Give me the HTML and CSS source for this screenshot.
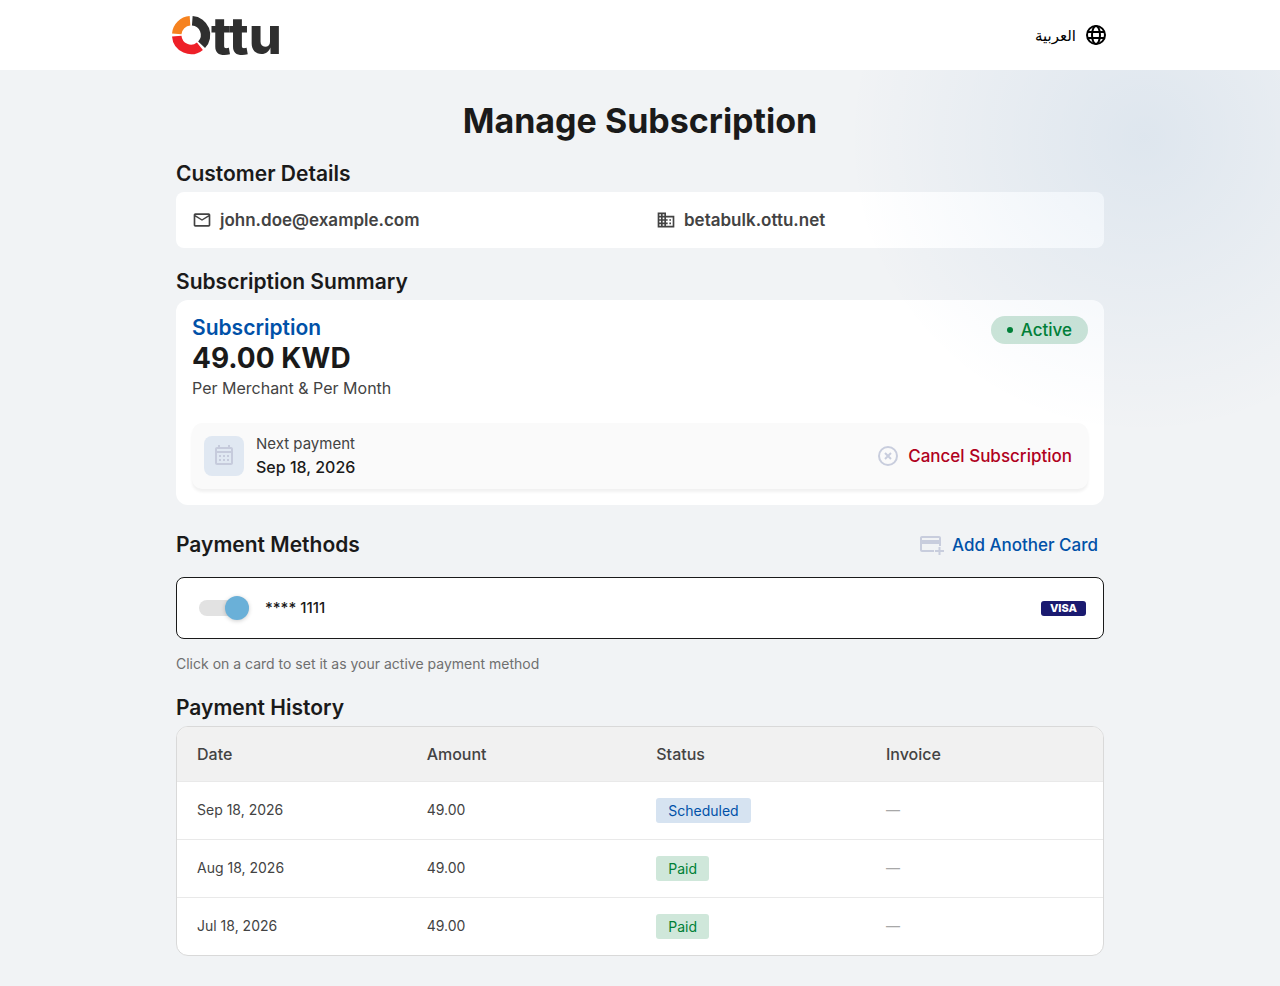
FILE: index.html
```html
<!DOCTYPE html>
<html lang="en">
<head>
    <meta charset="UTF-8">
    <meta name="viewport" content="width=device-width, initial-scale=1.0">
    <title>Manage Subscription</title>
    <link rel="stylesheet" href="styles.css">
</head>
<body>
    <header class="header">
        <div class="header-inner">
            <a href="#" class="logo" aria-label="Ottu">
                <svg width="124" height="70" viewBox="0 0 124 70">
                    <g fill="none" stroke-width="9.500">
                        <path d="M4.750 33.800A14.250 14.250 0 0 1 18 20.750" stroke="#f6821f"/>
                        <path d="M20.300 20.750A14.250 14.250 0 0 1 29.600 44.800" stroke="#2f2f2f"/>
                        <path d="M27.900 46.200A14.250 14.250 0 0 1 4.750 36.200" stroke="#ee2028"/>
                    </g>
                    <text class="logo-text" x="39" y="54">ttu</text>
                </svg>
            </a>
            <a href="#" class="lang" lang="ar">
                <span>العربية</span>
                <svg width="24" height="24" viewBox="0 0 24 24" fill="none" stroke="#000" stroke-width="2">
                    <circle cx="12" cy="12" r="9"/>
                    <ellipse cx="12" cy="12" rx="4" ry="9"/>
                    <path d="M3.600 9h16.800M3.600 15h16.800"/>
                </svg>
            </a>
        </div>
    </header>

    <main class="page">
        <div class="container">
            <h1>Manage Subscription</h1>

            <section>
                <h2>Customer Details</h2>
                <div class="card customer">
                    <div class="customer-item">
                        <svg width="20" height="20" viewBox="0 0 24 24" fill="#434343"><path d="M22 6c0-1.100-.9-2-2-2H4c-1.100 0-2 .9-2 2v12c0 1.100.9 2 2 2h16c1.100 0 2-.9 2-2V6zm-2 0l-8 5-8-5h16zm0 12H4V8l8 5 8-5v10z"/></svg>
                        <span>john.doe@example.com</span>
                    </div>
                    <div class="customer-item">
                        <svg width="20" height="20" viewBox="0 0 24 24" fill="#434343"><path d="M12 7V3H2v18h20V7H12zM6 19H4v-2h2v2zm0-4H4v-2h2v2zm0-4H4V9h2v2zm0-4H4V5h2v2zm4 12H8v-2h2v2zm0-4H8v-2h2v2zm0-4H8V9h2v2zm0-4H8V5h2v2zm10 12h-8v-2h2v-2h-2v-2h2v-2h-2V9h8v10zm-2-8h-2v2h2v-2zm0 4h-2v2h2v-2z"/></svg>
                        <span>betabulk.ottu.net</span>
                    </div>
                </div>
            </section>

            <section>
                <h2>Subscription Summary</h2>
                <div class="card summary">
                    <div class="summary-top">
                        <div>
                            <h3>Subscription</h3>
                            <p class="price">49.00 KWD</p>
                            <p class="period">Per Merchant &amp; Per Month</p>
                        </div>
                        <span class="status">Active</span>
                    </div>
                    <div class="next">
                        <div class="next-icon">
                            <svg width="24" height="24" viewBox="0 0 24 24" fill="#c6cbdc"><path d="M19 3h-1V1h-2v2H8V1H6v2H5c-1.100 0-2 .9-2 2v14c0 1.100.9 2 2 2h14c1.100 0 2-.9 2-2V5c0-1.100-.9-2-2-2zm0 16H5V9h14v10zm0-12H5V5h14v2z"/><path d="M7 11h2v2H7zM11 11h2v2h-2zM15 11h2v2h-2zM7 15h2v2H7zM11 15h2v2h-2zM15 15h2v2h-2z"/></svg>
                        </div>
                        <div class="next-text">
                            <p class="next-label">Next payment</p>
                            <p class="next-date">Sep 18, 2026</p>
                        </div>
                        <button type="button" class="btn btn-cancel">
                            <svg width="24" height="24" viewBox="0 0 24 24" fill="none" stroke="#c8cddd" stroke-width="2"><circle cx="12" cy="12" r="9"/><path d="M9 9l6 6M15 9l-6 6"/></svg>
                            Cancel Subscription
                        </button>
                    </div>
                </div>
            </section>

            <section>
                <div class="section-head">
                    <h2>Payment Methods</h2>
                    <button type="button" class="btn btn-add">
                        <svg width="24" height="24" viewBox="0 0 24 24" fill="#c8cddd"><path fill-rule="evenodd" d="M2 3h17c1.100 0 2 .9 2 2v8h-2v-2H2v6h12v2H2c-1.100 0-2-.9-2-2V5c0-1.100.9-2 2-2zm0 2v2h17V5H2z"/><path d="M18.500 14h2v3h3.500v2h-3.500v3h-2v-3H15v-2h3.500z"/></svg>
                        Add Another Card
                    </button>
                </div>
                <label class="pay-card" for="card-1111">
                    <input type="checkbox" id="card-1111" class="toggle" checked>
                    <span class="pay-number">**** 1111</span>
                    <span class="brand">VISA</span>
                </label>
                <p class="hint">Click on a card to set it as your active payment method</p>
            </section>

            <section>
                <h2>Payment History</h2>
                <div class="table-wrap">
                    <table>
                        <thead>
                            <tr>
                                <th>Date</th>
                                <th>Amount</th>
                                <th>Status</th>
                                <th>Invoice</th>
                            </tr>
                        </thead>
                        <tbody>
                            <tr>
                                <td>Sep 18, 2026</td>
                                <td>49.00</td>
                                <td><span class="tag tag-scheduled">Scheduled</span></td>
                                <td class="empty">—</td>
                            </tr>
                            <tr>
                                <td>Aug 18, 2026</td>
                                <td>49.00</td>
                                <td><span class="tag tag-paid">Paid</span></td>
                                <td class="empty">—</td>
                            </tr>
                            <tr>
                                <td>Jul 18, 2026</td>
                                <td>49.00</td>
                                <td><span class="tag tag-paid">Paid</span></td>
                                <td class="empty">—</td>
                            </tr>
                        </tbody>
                    </table>
                </div>
            </section>
        </div>
    </main>
</body>
</html>
```

FILE: styles.css
```css
* {
    box-sizing: border-box;
}
body {
    margin: 0;
    min-height: 100vh;
    display: flex;
    flex-direction: column;
    font-family: "Inter", sans-serif;
    font-size: 16px;
    line-height: 24px;
    color: #434343;
    background-color: #f1f3f5;
}
h1, h2, h3, p {
    margin: 0;
}

/* header */
.header {
    background-color: #fff;
}
.header-inner {
    display: flex;
    align-items: center;
    justify-content: space-between;
    max-width: 968px;
    height: 70px;
    margin: 0 auto;
    padding: 0 16px;
}
.logo {
    display: flex;
}
.logo svg {
    overflow: visible;
}
.logo-text {
    font-size: 52px;
    font-weight: 800;
    fill: #2f2f2f;
}
.lang {
    display: flex;
    align-items: center;
    gap: 8px;
    color: #000;
    font-family: "Noto Sans", "DejaVu Sans", sans-serif;
    font-size: 15px;
    text-decoration: none;
}

/* page */
.page {
    position: relative;
    flex: 1;
    overflow: hidden;
}
.page::after {
    content: "";
    position: absolute;
    top: -232px;
    right: -164px;
    width: 600px;
    height: 600px;
    background: radial-gradient(circle, rgba(0, 80, 160, 0.08) 0%, transparent 70%);
    pointer-events: none;
}
.container {
    max-width: 960px;
    margin: 0 auto;
    padding: 28px 16px;
}
h1 {
    margin-bottom: 16px;
    font-size: 34px;
    line-height: 46px;
    font-weight: 700;
    color: #1a1a1a;
    text-align: center;
}
section {
    margin-bottom: 20px;
}
section:last-child {
    margin-bottom: 0;
}
h2 {
    margin-bottom: 4px;
    font-size: 21px;
    line-height: 28px;
    font-weight: 600;
    color: #1a1a1a;
}
.card {
    background-color: #fff;
    border-radius: 8px;
    padding: 16px;
}
.btn {
    display: flex;
    align-items: center;
    gap: 8px;
    padding: 0;
    border: none;
    background: none;
    font-family: inherit;
    font-size: 17px;
    line-height: 24px;
    font-weight: 500;
    cursor: pointer;
}

/* customer */
.customer {
    display: grid;
    grid-template-columns: 1fr 1fr;
    gap: 32px;
    font-size: 17px;
    font-weight: 600;
}
.customer-item {
    display: flex;
    align-items: center;
    gap: 8px;
}

/* summary */
.summary {
    border-radius: 12px;
}
.summary-top {
    display: flex;
    align-items: flex-start;
    justify-content: space-between;
    margin-bottom: 23px;
}
h3 {
    font-size: 21px;
    line-height: 24px;
    font-weight: 600;
    color: #0051a8;
}
.price {
    font-size: 28px;
    line-height: 36px;
    font-weight: 700;
    color: #1a1a1a;
}
.status {
    display: flex;
    align-items: center;
    gap: 8px;
    padding: 2px 16px;
    border-radius: 14px;
    background-color: #cce5d8;
    color: #008036;
    font-size: 17px;
    font-weight: 500;
}
.status::before {
    content: "";
    width: 6px;
    height: 6px;
    border-radius: 50%;
    background-color: #008036;
}
.next {
    display: flex;
    align-items: center;
    gap: 12px;
    padding: 10px 16px 10px 12px;
    border-radius: 10px;
    background-color: #fafafa;
    box-shadow: 0 3px 3px rgba(0, 0, 0, 0.06);
}
.next-icon {
    display: flex;
    align-items: center;
    justify-content: center;
    width: 40px;
    height: 40px;
    border-radius: 8px;
    background-color: #e0e8f2;
}
.next-text {
    flex: 1;
}
.next-label {
    font-size: 15px;
    line-height: 22px;
}
.next-date {
    font-weight: 500;
    color: #1a1a1a;
}
.btn-cancel {
    color: #b00020;
}

/* payment methods */
.section-head {
    display: flex;
    align-items: center;
    justify-content: space-between;
    padding: 6px 6px 18px 0;
}
.section-head h2 {
    margin: 0;
}
.btn-add {
    color: #0051a8;
}
.pay-card {
    display: flex;
    align-items: center;
    gap: 16px;
    height: 62px;
    padding: 0 17px 0 22px;
    border: 1px solid #1a1a1a;
    border-radius: 8px;
    background-color: #fff;
    cursor: pointer;
}
.toggle {
    appearance: none;
    display: flex;
    align-items: center;
    width: 50px;
    height: 16px;
    margin: 0;
    border-radius: 8px;
    background-color: #e2e2e2;
    cursor: pointer;
}
.toggle::before {
    content: "";
    width: 24px;
    height: 24px;
    border-radius: 50%;
    background-color: #9e9e9e;
    box-shadow: 0 1px 4px rgba(0, 0, 0, 0.2);
}
.toggle:checked::before {
    margin-left: auto;
    background-color: #6ab0d8;
}
.pay-number {
    flex: 1;
    font-size: 15px;
    font-weight: 500;
    color: #1a1a1a;
}
.brand {
    padding: 0 9px;
    border-radius: 3px;
    background-color: #1a1a70;
    color: #fff;
    font-size: 11px;
    line-height: 15px;
    font-weight: 800;
}
.hint {
    margin-top: 15px;
    font-size: 14px;
    line-height: 20px;
    color: #6f6f6f;
}

/* payment history */
.table-wrap {
    border: 1px solid #d9d9d9;
    border-radius: 12px;
    background-color: #fff;
    overflow: hidden;
}
table {
    width: 100%;
    border-collapse: collapse;
    table-layout: fixed;
}
th {
    width: 24.8%;
    height: 54px;
    padding: 0 20px;
    background-color: #f1f1f1;
    font-weight: 500;
    text-align: left;
}
th:last-child {
    width: auto;
}
td {
    height: 58px;
    padding: 0 20px;
    border-top: 1px solid #e9e9e9;
    font-size: 14px;
}
.tag {
    display: inline-block;
    padding: 2px 12px;
    border-radius: 3px;
    line-height: 21px;
}
.tag-scheduled {
    background-color: #d6e3f1;
    color: #0051a8;
}
.tag-paid {
    background-color: #cfe7da;
    color: #008036;
}
.empty {
    color: #a8a8a8;
}
```
